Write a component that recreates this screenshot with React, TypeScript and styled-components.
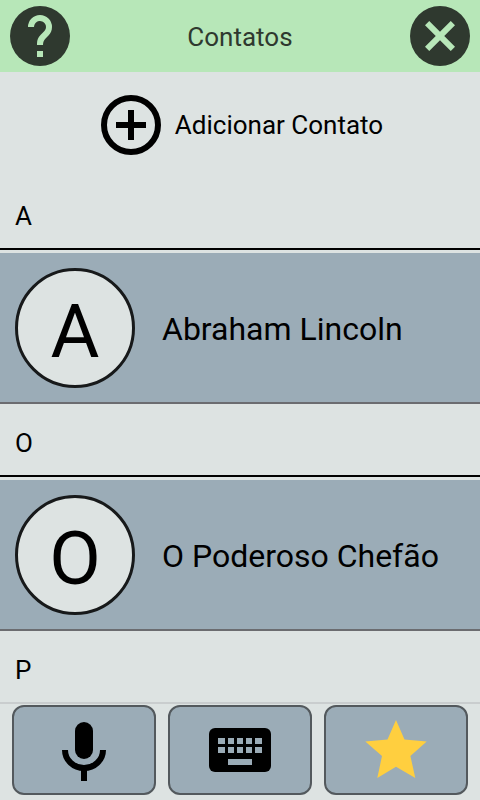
import React from "react";
import styled, { createGlobalStyle } from "styled-components";

const GlobalStyle = createGlobalStyle`
  *, *::before, *::after {
    box-sizing: border-box;
  }
  body {
    margin: 0;
    background: #dde3e2;
    color: #000;
    font-family: Roboto, "Liberation Sans", sans-serif;
    font-size: 26px;
    line-height: 32px;
  }
  button {
    margin: 0;
    padding: 0;
    border: 0;
    background: none;
    color: inherit;
    font: inherit;
    cursor: pointer;
  }
  svg {
    display: block;
  }
`;

const Screen = styled.div`
  display: flex;
  flex-direction: column;
  height: 100vh;
`;

const Header = styled.header`
  display: flex;
  flex: none;
  align-items: center;
  justify-content: space-between;
  padding: 6px 10px;
  background: #b7e7b8;
  color: #2f392f;
`;

const Title = styled.h1`
  margin: 0;
  padding-top: 2px;
  font-size: 26px;
  font-weight: 400;
`;

const Content = styled.main`
  flex: 1;
  min-height: 0;
  overflow: hidden;
`;

const AddButton = styled.button`
  display: flex;
  align-items: center;
  justify-content: center;
  gap: 14px;
  width: 100%;
  padding: 23px 0 22px;
  padding-left: 4px;
`;

const SectionTitle = styled.h2`
  margin: 0 0 3px;
  padding: 23px 15px 16px;
  border-bottom: 2px solid #000;
  font-size: 26px;
  font-weight: 400;
`;

const ContactRow = styled.button`
  display: flex;
  align-items: center;
  gap: 27px;
  width: 100%;
  padding: 15px 15px 14px;
  border-bottom: 2px solid #6b6c70;
  background: #9bacb7;
  text-align: left;
`;

const Avatar = styled.span`
  display: flex;
  flex: none;
  align-items: center;
  justify-content: center;
  width: 120px;
  height: 120px;
  padding-top: 6px;
  border: 3px solid #17191a;
  border-radius: 50%;
  background: #dde3e2;
  font-size: 75px;
  line-height: 88px;
`;

const ContactName = styled.span`
  padding-top: 2px;
  font-size: 32px;
  line-height: 40px;
`;

const Footer = styled.nav`
  display: grid;
  flex: none;
  grid-template-columns: repeat(3, 1fr);
  gap: 12px;
  padding: 1px 12px 5px;
  border-top: 2px solid #c9cdce;
`;

const FooterButton = styled.button`
  display: flex;
  align-items: center;
  justify-content: center;
  height: 90px;
  border: 2px solid #53595d;
  border-radius: 12px;
  background: #9bacb7;
`;

const HelpIcon = () => (
  <svg width="60" height="60" viewBox="0 0 60 60" aria-hidden="true">
    <circle cx="30" cy="30" r="30" fill="#2f392f" />
    <path
      d="M18 21a12 12 0 0 1 24 0c0 3.300-1.350 6.300-3.500 8.450l-2.700 2.750C33.900 34.200 33 36 33 39h-6v-1.500c0-3.300 1.350-6.300 3.500-8.500l3.700-3.750A6 6 0 1 0 24 21zM27 45h6v6h-6z"
      fill="#b7e7b8"
    />
  </svg>
);

const CloseIcon = () => (
  <svg width="60" height="60" viewBox="0 0 60 60" aria-hidden="true">
    <circle cx="30" cy="30" r="30" fill="#2f392f" />
    <path
      d="M45 19.230 40.770 15 30 25.770 19.230 15 15 19.230 25.770 30 15 40.770 19.230 45 30 34.230 40.770 45 45 40.770 34.230 30z"
      fill="#b7e7b8"
    />
  </svg>
);

const AddIcon = () => (
  <svg width="60" height="60" viewBox="0 0 60 60" aria-hidden="true">
    <circle cx="30" cy="30" r="27" fill="none" stroke="currentColor" strokeWidth="6" />
    <path d="M27 15h6v12h12v6H33v12h-6V33H15v-6h12z" fill="currentColor" />
  </svg>
);

const MicIcon = () => (
  <svg width="72" height="72" viewBox="0 0 72 72" aria-hidden="true">
    <rect x="27" y="8" width="18" height="37" rx="9" />
    <path d="M17 36a19 18 0 0 0 38 0" fill="none" stroke="#000" strokeWidth="6" />
    <path d="M33 54h6v13h-6z" />
  </svg>
);

const KeyboardIcon = () => (
  <svg width="62" height="44" viewBox="0 0 62 44" aria-hidden="true">
    <rect width="62" height="44" rx="6" />
    <g fill="#9bacb7">
      {[9, 19, 28, 37, 46].map((x, i) => (
        <React.Fragment key={x}>
          <rect x={x} y="10" width={i === 0 || i === 4 ? 7 : 6} height="6" />
          <rect x={x} y="19" width={i === 0 || i === 4 ? 7 : 6} height="6" />
        </React.Fragment>
      ))}
      <rect x="19" y="31" width="24" height="6" />
    </g>
  </svg>
);

const StarIcon = () => (
  <svg width="62" height="60" viewBox="0 0 62 60" aria-hidden="true">
    <path
      d="M31 0 39.500 19.600 61.700 21.400 45.400 36 50.300 58 31 46.700 12.300 58 17 36 .3 21.400 22.500 19.600z"
      fill="#ffcf3f"
    />
  </svg>
);

const sections = [
  { letter: "A", contacts: ["Abraham Lincoln"] },
  { letter: "O", contacts: ["O Poderoso Chefão"] },
  { letter: "P", contacts: [] },
];

export default function App() {
  return (
    <Screen>
      <GlobalStyle />
      <Header>
        <button type="button" aria-label="Ajuda">
          <HelpIcon />
        </button>
        <Title>Contatos</Title>
        <button type="button" aria-label="Fechar">
          <CloseIcon />
        </button>
      </Header>
      <Content>
        <AddButton type="button">
          <AddIcon />
          <span>Adicionar Contato</span>
        </AddButton>
        {sections.map(({ letter, contacts }) => (
          <section key={letter}>
            <SectionTitle>{letter}</SectionTitle>
            {contacts.map((name) => (
              <ContactRow type="button" key={name}>
                <Avatar aria-hidden="true">{name[0]}</Avatar>
                <ContactName>{name}</ContactName>
              </ContactRow>
            ))}
          </section>
        ))}
      </Content>
      <Footer aria-label="Atalhos">
        <FooterButton type="button" aria-label="Microfone">
          <MicIcon />
        </FooterButton>
        <FooterButton type="button" aria-label="Teclado">
          <KeyboardIcon />
        </FooterButton>
        <FooterButton type="button" aria-label="Favoritos">
          <StarIcon />
        </FooterButton>
      </Footer>
    </Screen>
  );
}
